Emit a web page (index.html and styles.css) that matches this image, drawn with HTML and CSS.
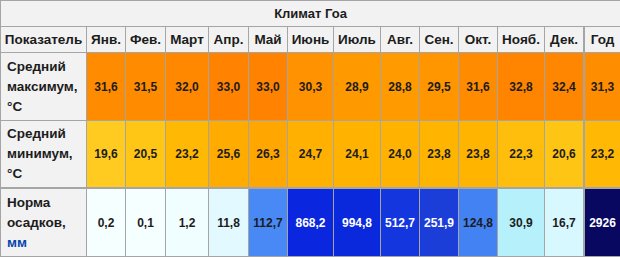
FILE: index.html
```html
<!DOCTYPE html>
<html lang="ru">
<head>
<meta charset="utf-8">
<title>Климат Гоа</title>
<link rel="stylesheet" href="styles.css">
</head>
<body>
<div class="climate">
  <div class="title">Климат Гоа</div>

  <div class="hd">Показатель</div>
  <div class="hd">Янв.</div>
  <div class="hd">Фев.</div>
  <div class="hd">Март</div>
  <div class="hd">Апр.</div>
  <div class="hd">Май</div>
  <div class="hd">Июнь</div>
  <div class="hd">Июль</div>
  <div class="hd">Авг.</div>
  <div class="hd">Сен.</div>
  <div class="hd">Окт.</div>
  <div class="hd">Нояб.</div>
  <div class="hd">Дек.</div>
  <div class="hd year">Год</div>

  <div class="lbl"><p class="lbl-text">Средний<br>максимум,<br>°C</p></div>
  <div class="c" style="background:rgb(255,139,0)">31,6</div>
  <div class="c" style="background:rgb(255,140,0)">31,5</div>
  <div class="c" style="background:rgb(255,136,0)">32,0</div>
  <div class="c" style="background:rgb(255,131,0)">33,0</div>
  <div class="c" style="background:rgb(255,131,0)">33,0</div>
  <div class="c" style="background:rgb(255,146,0)">30,3</div>
  <div class="c" style="background:rgb(255,153,0)">28,9</div>
  <div class="c" style="background:rgb(255,154,0)">28,8</div>
  <div class="c" style="background:rgb(255,150,0)">29,5</div>
  <div class="c" style="background:rgb(255,139,0)">31,6</div>
  <div class="c" style="background:rgb(255,132,0)">32,8</div>
  <div class="c" style="background:rgb(255,134,0)">32,4</div>
  <div class="c year" style="background:rgb(255,141,0)">31,3</div>

  <div class="lbl"><p class="lbl-text">Средний<br>минимум,<br>°C</p></div>
  <div class="c" style="background:rgb(255,203,32)">19,6</div>
  <div class="c" style="background:rgb(255,198,22)">20,5</div>
  <div class="c" style="background:rgb(255,184,4)">23,2</div>
  <div class="c" style="background:rgb(255,171,0)">25,6</div>
  <div class="c" style="background:rgb(255,167,0)">26,3</div>
  <div class="c" style="background:rgb(255,176,0)">24,7</div>
  <div class="c" style="background:rgb(255,179,0)">24,1</div>
  <div class="c" style="background:rgb(255,179,0)">24,0</div>
  <div class="c" style="background:rgb(255,180,0)">23,8</div>
  <div class="c" style="background:rgb(255,180,0)">23,8</div>
  <div class="c" style="background:rgb(255,189,12)">22,3</div>
  <div class="c" style="background:rgb(255,197,20)">20,6</div>
  <div class="c year" style="background:rgb(255,184,4)">23,2</div>

  <div class="lbl rain"><p class="lbl-text">Норма<br>осадков,<br><span class="unit">мм</span></p></div>
  <div class="c rain" style="background:rgb(245,255,255)">0,2</div>
  <div class="c rain" style="background:rgb(246,255,255)">0,1</div>
  <div class="c rain" style="background:rgb(241,254,255)">1,2</div>
  <div class="c rain" style="background:rgb(226,250,255)">11,8</div>
  <div class="c rain" style="background:rgb(72,137,246)">112,7</div>
  <div class="c rain light" style="background:rgb(10,38,222)">868,2</div>
  <div class="c rain light" style="background:rgb(10,40,220)">994,8</div>
  <div class="c rain light" style="background:rgb(20,54,222)">512,7</div>
  <div class="c rain light" style="background:rgb(28,62,216)">251,9</div>
  <div class="c rain" style="background:rgb(66,130,242)">124,8</div>
  <div class="c rain" style="background:rgb(182,240,250)">30,9</div>
  <div class="c rain" style="background:rgb(216,248,255)">16,7</div>
  <div class="c rain light year" style="background:rgb(8,8,96)">2926</div>
</div>
</body>
</html>
```

FILE: styles.css
```css
html, body {
  margin: 0;
  padding: 0;
  background: #ffffff;
}

.climate {
  display: grid;
  grid-template-columns: 85px 38px 39px 42px 39px 38px 45px 46px 38px 38px 38px 46px 38px 36px;
  grid-template-rows: 25px 25px 67px 66px 68px;
  gap: 1px;
  width: 619px;
  border: 1px solid #a5a5a5;
  background: #a5a5a5;
  font-family: "Liberation Sans", Arial, sans-serif;
  font-weight: bold;
  color: #1c1c1c;
}

.title {
  grid-column: 1 / -1;
  background: #f2f2f2;
  font-size: 13px;
  display: flex;
  align-items: center;
  justify-content: center;
}

.hd {
  background: #f2f2f2;
  font-size: 13.5px;
  display: flex;
  align-items: center;
  justify-content: center;
}

.lbl {
  background: #f2f2f2;
  padding-left: 6px;
  display: flex;
  align-items: center;
}

.lbl-text {
  margin: 0;
  font-size: 13.5px;
  line-height: 20px;
}

.c {
  font-size: 12px;
  display: flex;
  align-items: center;
  justify-content: center;
}

.year {
  margin-left: 1px;
}

.rain {
  margin-top: 1px;
}

.light {
  color: #ffffff;
}

.unit {
  color: #0645ad;
}
```
